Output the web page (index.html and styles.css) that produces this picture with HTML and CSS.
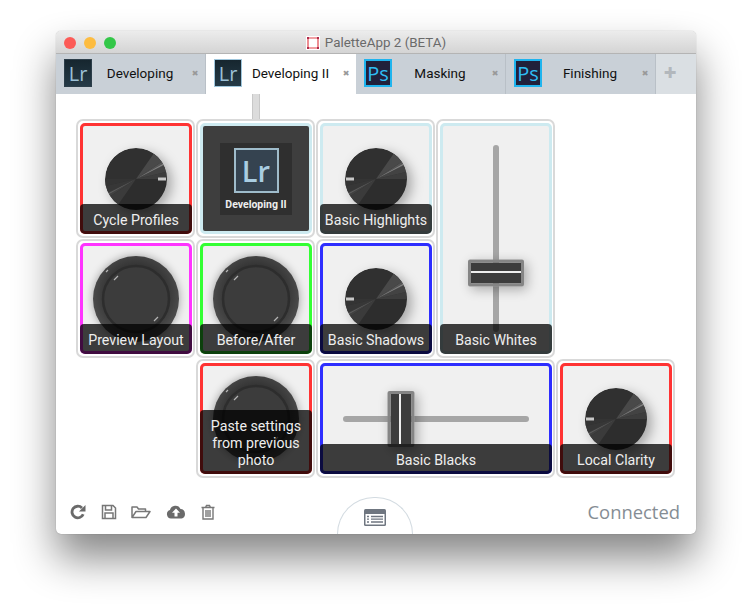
FILE: index.html
```html
<!DOCTYPE html>
<html lang="en">
<head>
  <meta charset="UTF-8" />
  <title>PaletteApp 2 (BETA)</title>
  <link rel="stylesheet" href="styles.css">
</head>
<body>

  <svg class="defs" aria-hidden="true">
    <defs>
      <clipPath id="knobClip"><circle r="31" /></clipPath>
      <radialGradient id="ringFill" cx="50%" cy="45%" r="55%">
        <stop offset="60%" stop-color="#333" />
        <stop offset="100%" stop-color="#505050" />
      </radialGradient>
      <symbol id="dial" viewBox="-32 -32 64 64">
        <g clip-path="url(#knobClip)">
          <circle r="31" fill="#303030" />
          <path d="M0 0L40 0 39 -9z M0 0L-40 0 -39 9z" fill="#3d3d3d" />
          <path d="M0 0L39 -9 36 -17z M0 0L-39 9 -36 17z" fill="#434343" />
          <path d="M0 0L36 -17 33 -22z M0 0L-36 17 -33 22z" fill="#555" />
          <path d="M0 0L33 -22 23 -33z M0 0L-33 22 -23 33z" fill="#494949" />
          <path d="M0 0L34 -19 35 -18z M0 0L-34 19 -35 18z" fill="#8c8c8c" />
          <path d="M-40 0L40 0 40 40 -40 40z" fill="#2b2b2b" opacity=".45" />
        </g>
      </symbol>
      <symbol id="button" viewBox="-44 -44 88 88">
        <circle r="43" fill="url(#ringFill)" />
        <circle r="33" fill="#3c3c3c" stroke="#2d2d2d" stroke-width="2.5" />
        <path d="M-30 -27l2 -2M-22 -19l4 -4M18 22l4 -4" stroke="#b5b5b5" stroke-width="1.2" />
      </symbol>
    </defs>
  </svg>

  <div class="window">
    <header class="titlebar">
      <div class="lights">
        <span class="light light-red"></span>
        <span class="light light-yellow"></span>
        <span class="light light-green"></span>
      </div>
      <svg class="app-icon" width="14" height="14" viewBox="0 0 14 14">
        <rect width="14" height="14" fill="#fff" />
        <path d="M2 2h10v10H2z" fill="none" stroke="#e2434b" stroke-width="1.2" />
        <path d="M1 1h2v2H1zM11 1h2v2h-2zM1 11h2v2H1zM11 11h2v2h-2z" fill="#b02a4a" />
      </svg>
      <span>PaletteApp 2 (BETA)</span>
    </header>

    <nav class="tabs">
      <div class="tab">
        <span class="badge badge-lr">Lr</span>
        <span class="tab-name">Developing</span>
        <span class="tab-close">✖</span>
      </div>
      <div class="tab active">
        <span class="badge badge-lr">Lr</span>
        <span class="tab-name">Developing II</span>
        <span class="tab-close">✖</span>
      </div>
      <div class="tab">
        <span class="badge badge-ps">Ps</span>
        <span class="tab-name">Masking</span>
        <span class="tab-close">✖</span>
      </div>
      <div class="tab">
        <span class="badge badge-ps">Ps</span>
        <span class="tab-name">Finishing</span>
        <span class="tab-close">✖</span>
      </div>
      <div class="tab-add">✚</div>
    </nav>

    <main class="board">
      <div class="grid">
        <div class="cell">
          <div class="face red">
            <svg class="dial" viewBox="-32 -32 64 64"><use href="#dial" x="-32" y="-32" width="64" height="64" /><rect x="22" y="-1.5" width="8" height="3" fill="#c9c9c9" /></svg>
            <div class="label">Cycle Profiles</div>
          </div>
        </div>

        <div class="cell connected">
          <div class="face sky dark">
            <div class="profile">
              <div class="profile-tile">Lr</div>
              <div class="profile-name">Developing II</div>
            </div>
          </div>
        </div>

        <div class="cell">
          <div class="face sky">
            <svg class="dial" viewBox="-32 -32 64 64"><use href="#dial" x="-32" y="-32" width="64" height="64" /><rect x="-30" y="-1.5" width="8" height="3" fill="#c9c9c9" /></svg>
            <div class="label">Basic Highlights</div>
          </div>
        </div>

        <div class="cell tall">
          <div class="face sky">
            <div class="track track-v">
              <div class="handle handle-v" style="top: 68.7%"></div>
            </div>
            <div class="label">Basic Whites</div>
          </div>
        </div>

        <div class="cell col-1">
          <div class="face magenta">
            <svg class="push"><use href="#button" /></svg>
            <div class="label">Preview Layout</div>
          </div>
        </div>

        <div class="cell">
          <div class="face green">
            <svg class="push"><use href="#button" /></svg>
            <div class="label">Before/After</div>
          </div>
        </div>

        <div class="cell">
          <div class="face blue">
            <svg class="dial" viewBox="-32 -32 64 64"><use href="#dial" x="-32" y="-32" width="64" height="64" /><rect x="-30" y="-1.5" width="8" height="3" fill="#c9c9c9" /></svg>
            <div class="label">Basic Shadows</div>
          </div>
        </div>

        <div class="cell col-2">
          <div class="face red">
            <svg class="push"><use href="#button" /></svg>
            <div class="label">Paste settings from previous photo</div>
          </div>
        </div>

        <div class="cell wide">
          <div class="face blue">
            <div class="track track-h">
              <div class="handle handle-h" style="left: 31%"></div>
            </div>
            <div class="label">Basic Blacks</div>
          </div>
        </div>

        <div class="cell">
          <div class="face red">
            <svg class="dial" viewBox="-32 -32 64 64"><use href="#dial" x="-32" y="-32" width="64" height="64" /><rect x="-30" y="-1.5" width="8" height="3" fill="#c9c9c9" /></svg>
            <div class="label">Local Clarity</div>
          </div>
        </div>
      </div>

      <footer class="footer">
        <div class="tools">
          <svg class="tool" viewBox="0 0 16 16"><path d="M13.2 10.2A5.8 5.8 0 1 1 12 4" fill="none" stroke="#6a6a6a" stroke-width="2.8" /><path d="M15.500 1v6.600H8.900z" fill="#6a6a6a" /></svg>
          <svg class="tool" viewBox="0 0 16 16"><path d="M1.500 1.500h10.500l2.500 2.500v10.500h-13z M4.500 1.500v4.500h6v-4.500 M4 14.500v-5.500h8v5.500" fill="none" stroke="#777" stroke-width="1.500" /></svg>
          <svg class="tool tool-wide" viewBox="0 0 20 16"><path d="M1 13.500v-10.500h5l1.500 2h7v2.500 M1 13.500h14l4 -6h-14z" fill="none" stroke="#777" stroke-width="1.500" stroke-linejoin="round" /></svg>
          <svg class="tool tool-wide" viewBox="0 0 20 16"><path d="M5 14.500a4.300 4.300 0 0 1 -1 -8.400a5.500 5.500 0 0 1 10.500 -1a4.800 4.800 0 0 1 1 9.400z" fill="#6a6a6a" /><path d="M10 4.500l4 4.200h-2.500v3.800h-3v-3.800h-2.500z" fill="#fff" /></svg>
          <svg class="tool" viewBox="0 0 16 16"><path d="M1.500 3.500h13 M5.500 3.500l1 -2h3l1 2 M3 3.500v11.500h10v-11.500 M6 6v7 M8 6v7 M10 6v7" fill="none" stroke="#777" stroke-width="1.400" /></svg>
        </div>
        <div class="menu-button">
          <svg class="menu-icon" viewBox="0 0 22 17">
            <rect width="22" height="17" rx="1.500" fill="#6f7680" />
            <rect x="1.500" y="5" width="19" height="10.500" fill="#fff" />
            <path d="M3 7.500h2M7 7.500h12M3 10.200h2M7 10.200h12M3 13h2M7 13h12" stroke="#6f7680" stroke-width="1.300" />
          </svg>
        </div>
        <div class="status">Connected</div>
      </footer>
    </main>
  </div>

</body>
</html>
```

FILE: styles.css
```css
body {
  margin: 0;
  padding: 31px 56px 0;
  height: 614px;
  box-sizing: border-box;
  overflow: hidden;
  background: #fff;
  font-family: Roboto, 'Liberation Sans', sans-serif;
}

.defs {
  position: absolute;
  width: 0;
  height: 0;
}

.window {
  width: 640px;
  height: 503px;
  display: flex;
  flex-direction: column;
  border-radius: 5px;
  background: #fff;
  box-shadow: 0 24px 42px rgba(0, 0, 0, 0.48), 0 0 1px rgba(0, 0, 0, 0.4);
}

/* title bar */
.titlebar {
  position: relative;
  flex: none;
  display: flex;
  align-items: center;
  justify-content: center;
  gap: 5px;
  padding-top: 1px;
  height: 21px;
  font-size: 13.4px;
  color: #6a6a6a;
  background: linear-gradient(#ececec, #d4d4d4);
  border-bottom: 1px solid #b4b4b4;
  border-radius: 5px 5px 0 0;
}

.lights {
  position: absolute;
  left: 8px;
  top: 6px;
  display: flex;
  gap: 8px;
}

.light {
  width: 12px;
  height: 12px;
  border-radius: 50%;
}

.light-red { background-color: #fc5b57; }
.light-yellow { background-color: #fdbc40; }
.light-green { background-color: #33c748; }

/* tabs */
.tabs {
  height: 40px;
  flex: none;
  display: flex;
  background-color: #dadfe3;
}

.tab {
  width: 150px;
  box-sizing: border-box;
  display: flex;
  align-items: center;
  padding: 0 5px 2px 8px;
  background-color: #c9d0d7;
  border-right: 1px solid #b9c0c7;
  font-size: 13.5px;
  color: #111;
}

.tab.active {
  background-color: #fff;
  border-right: none;
}

.tab-name {
  flex: 1;
  padding-right: 2px;
  text-align: center;
  white-space: nowrap;
}

.tab-close {
  width: 10px;
  text-align: center;
  font: 8px 'DejaVu Sans', sans-serif;
  color: #999;
}

.badge {
  width: 28px;
  height: 28px;
  box-sizing: border-box;
  display: flex;
  align-items: center;
  justify-content: center;
  border: 1px solid #2c3e4a;
  font: 20px 'Open Sans', sans-serif;
}

.badge-lr {
  background: linear-gradient(#16262f, #253a47);
  color: #9cc0d6;
}

.active .badge-lr {
  border-color: #9fc6dc;
}

.badge-ps {
  background-color: #21213b;
  border: 2px solid #1fb4ee;
  color: #2fbdf3;
}

.tab-add {
  flex: 1;
  display: flex;
  align-items: center;
  justify-content: center;
  padding: 0 12px 2px 0;
  font: 15px 'DejaVu Sans', sans-serif;
  color: #b2b7bc;
}

/* board */
.board {
  flex: 1;
  min-height: 0;
  display: flex;
  flex-direction: column;
}

.grid {
  display: grid;
  grid-template-columns: repeat(5, 119px);
  grid-auto-rows: 119px;
  gap: 1px;
  padding: 25px 0 0 20px;
}

.col-1 { grid-column: 1; }
.col-2 { grid-column: 2; }
.tall { grid-row: span 2; }
.wide { grid-column: span 2; }

.cell {
  box-sizing: border-box;
  padding: 2px 1px 2px 2px;
  border: 2px solid #d9d9d9;
  border-radius: 7px;
  position: relative;
}

.connected::before {
  content: "";
  position: absolute;
  top: -27px;
  left: 50%;
  width: 6px;
  height: 25px;
  margin-left: -4px;
  background-color: #dcdcdc;
  border: solid #c8c8c8;
  border-width: 0 1px;
}

.face {
  position: relative;
  height: 100%;
  box-sizing: border-box;
  display: flex;
  align-items: center;
  justify-content: center;
  background-color: #f0f0f0;
  border: 3px solid #cdeaf0;
  border-radius: 5px;
}

.red { border-color: #ff3333; }
.blue { border-color: #2e2eff; }
.magenta { border-color: #ff33ff; }
.green { border-color: #33ff33; }
.sky { border-color: #cdeaf0; }

.dark {
  background-color: #3e3e3e;
}

.label {
  position: absolute;
  left: -3px;
  right: -3px;
  bottom: -3px;
  padding: 8px 2px 5px;
  border-radius: 4px 4px 5px 5px;
  background-color: rgba(0, 0, 0, 0.75);
  color: #eee;
  font-size: 14.2px;
  line-height: 17px;
  text-align: center;
}

.dial {
  width: 64px;
  height: 64px;
  filter: drop-shadow(5px 4px 6px rgba(0, 0, 0, 0.3));
}

.push {
  width: 88px;
  height: 88px;
  filter: drop-shadow(0 0 4px rgba(0, 0, 0, 0.35));
}

.profile {
  width: 72px;
  height: 72px;
  display: flex;
  flex-direction: column;
  align-items: center;
  padding-top: 5px;
  box-sizing: border-box;
  background-color: #2f2f2f;
}

.profile-tile {
  width: 45px;
  height: 45px;
  box-sizing: border-box;
  display: flex;
  align-items: center;
  justify-content: center;
  border: 2px solid #9fbccb;
  background-color: #354350;
  color: #a9cde2;
  font: 600 29px 'Open Sans', sans-serif;
}

.profile-name {
  margin-top: 5px;
  font-size: 10.5px;
  font-weight: bold;
  color: #eee;
  white-space: nowrap;
}

/* sliders */
.track {
  position: relative;
  background-color: #a6a6a6;
  border-radius: 3px;
}

.track-v {
  width: 6px;
  height: 187px;
}

.track-h {
  width: 186px;
  height: 6px;
}

.handle {
  position: absolute;
  box-sizing: border-box;
  border: 3px solid #858585;
  border-radius: 2px;
  box-shadow: 3px 3px 12px rgba(0, 0, 0, 0.3);
}

.handle-v {
  left: -25px;
  width: 56px;
  height: 27px;
  transform: translateY(-50%);
  background: linear-gradient(#3c3c3c 0 9px, #eee 9px 11px, #3c3c3c 11px);
}

.handle-h {
  top: -25px;
  width: 27px;
  height: 56px;
  transform: translateX(-50%);
  background: linear-gradient(to right, #3c3c3c 0 9px, #eee 9px 11px, #3c3c3c 11px);
}

/* footer */
.footer {
  flex: 1;
  display: grid;
  grid-template-columns: 1fr auto 1fr;
  align-items: center;
  padding: 11px 16px 0 14px;
}

.tools {
  display: flex;
  align-items: center;
  gap: 14.5px;
}

.tool {
  width: 16px;
  height: 16px;
}

.tool-wide {
  width: 20px;
}

.menu-button {
  align-self: end;
  width: 76px;
  height: 37px;
  display: flex;
  justify-content: center;
  padding-top: 11px;
  box-sizing: border-box;
  border: 1px solid #d3dbe1;
  border-bottom: none;
  border-radius: 38px 38px 0 0;
}

.menu-icon {
  width: 22px;
  height: 17px;
}

.status {
  text-align: right;
  font: 18.4px 'Open Sans', sans-serif;
  color: #858d94;
}
```
